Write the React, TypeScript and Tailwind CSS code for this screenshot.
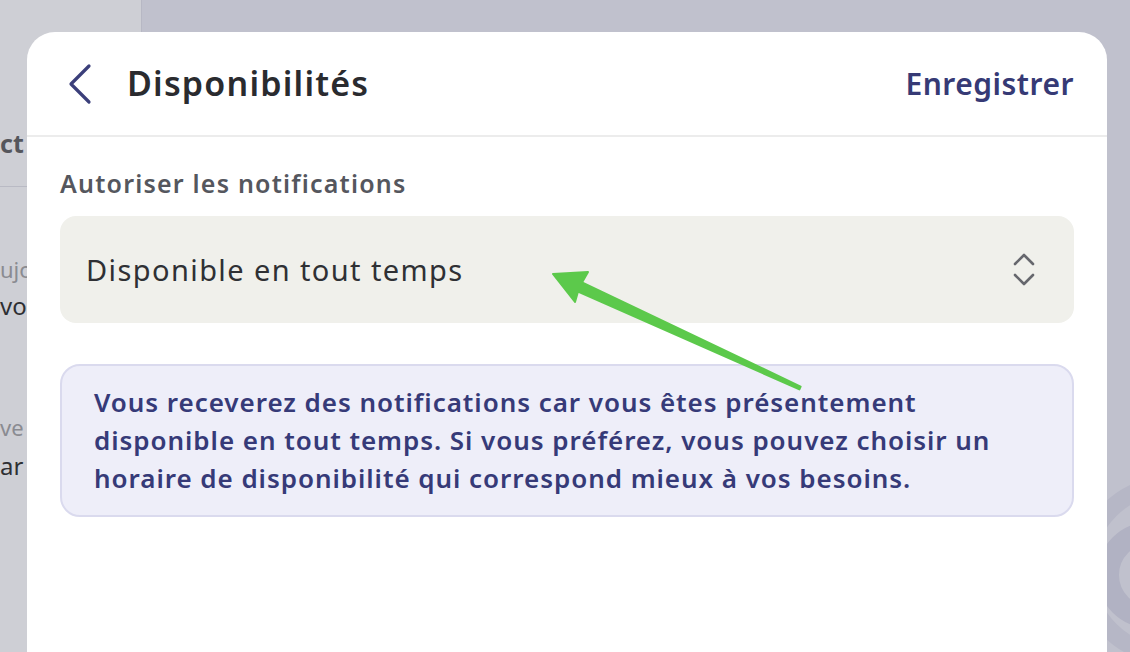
import React from 'react';

const font = { fontFamily: '"Noto Sans", "Open Sans", sans-serif' };

const BackIcon = () => (
  <svg width="26" height="42" viewBox="0 0 26 42" fill="none">
    <path d="M22 3 L4 21 L22 39" stroke="#3b3f7a" strokeWidth="3.2" strokeLinecap="round" strokeLinejoin="round" />
  </svg>
);

const UpDownIcon = () => (
  <svg width="24" height="36" viewBox="0 0 24 36" fill="none">
    <path d="M3 12 L12 3 L21 12" stroke="#66676d" strokeWidth="2.6" strokeLinecap="round" strokeLinejoin="round" />
    <path d="M3 23 L12 32 L21 23" stroke="#66676d" strokeWidth="2.6" strokeLinecap="round" strokeLinejoin="round" />
  </svg>
);

// annotation arrow drawn over the screenshot
const GreenArrow = () => (
  <svg className="pointer-events-none absolute left-0 top-0" width="1130" height="652" viewBox="0 0 1130 652">
    <polygon
      points="553,274 588,272 582,282.5 800.6,386.6 799.4,389.4 578,291.5 575,302"
      fill="#5cc94b"
      stroke="#5cc94b"
      strokeWidth="2"
      strokeLinejoin="round"
    />
  </svg>
);

const Sidebar = () => (
  <aside className="flex w-[142px] shrink-0 flex-col border-r border-[#b7b8c4] bg-[#cecfd5]">
    <div className="h-[120px]" />
    <div className="h-[67px] border-b border-[#b9bac4] pt-[8px] text-[25px] font-bold leading-[30px] text-[#55565c]">ct</div>
    <div className="pt-[67px] text-[22px] leading-[30px] text-[#8a8b91]">ujo</div>
    <div className="pt-[7px] text-[24px] leading-[30px] text-[#2e2f33]">vo</div>
    <div className="pt-[91px] text-[22px] leading-[30px] text-[#8a8b91]">ve</div>
    <div className="pt-[9px] text-[24px] leading-[30px] text-[#2e2f33]">ar</div>
  </aside>
);

const Rings = () => (
  <svg className="absolute right-0 top-[460px]" width="60" height="192" viewBox="0 0 60 192" fill="none">
    <circle cx="100" cy="110" r="85" stroke="#b6b7c6" strokeWidth="18" />
    <circle cx="80" cy="115" r="42" stroke="#b1b2c3" strokeWidth="22" />
  </svg>
);

export default function App() {
  return (
    <div className="relative flex h-[652px] w-[1130px] overflow-hidden bg-[#c0c1cd]" style={font}>
      <Sidebar />
      <main className="flex-1" />
      <Rings />

      <div className="absolute left-[27px] top-[32px] flex h-[660px] w-[1080px] flex-col rounded-t-[28px] bg-white">
        <header className="flex h-[105px] items-center justify-between border-b-2 border-[#ececec] pl-[40px] pr-[33px]">
          <div className="flex items-center gap-[34px]">
            <BackIcon />
            <h1 className="text-[34px] font-semibold tracking-[1.2px] text-[#2a2b2f]">Disponibilités</h1>
          </div>
          <button className="text-[30px] font-semibold tracking-[0.5px] text-[#363a75]">Enregistrer</button>
        </header>

        <section className="flex flex-col px-[33px]">
          <label className="pt-[31px] text-[25px] font-semibold leading-[30px] tracking-[1.2px] text-[#55575e]">
            Autoriser les notifications
          </label>

          <div className="mt-[18px] flex h-[107px] items-center justify-between rounded-[16px] bg-[#f0f0eb] pl-[26px] pr-[38px]">
            <span className="text-[29px] tracking-[1.4px] text-[#2f3034]">Disponible en tout temps</span>
            <UpDownIcon />
          </div>

          <div className="mt-[41px] rounded-[20px] border-2 border-[#dadaee] bg-[#eeeef9] px-[32px] pb-[18px] pt-[17px]">
            <p className="text-[26px] font-semibold leading-[38px] tracking-[0.95px] text-[#363a78]">
              Vous receverez des notifications car vous êtes présentement
              <br />
              disponible en tout temps. Si vous préférez, vous pouvez choisir un
              <br />
              horaire de disponibilité qui correspond mieux à vos besoins.
            </p>
          </div>
        </section>
      </div>

      <GreenArrow />
    </div>
  );
}
